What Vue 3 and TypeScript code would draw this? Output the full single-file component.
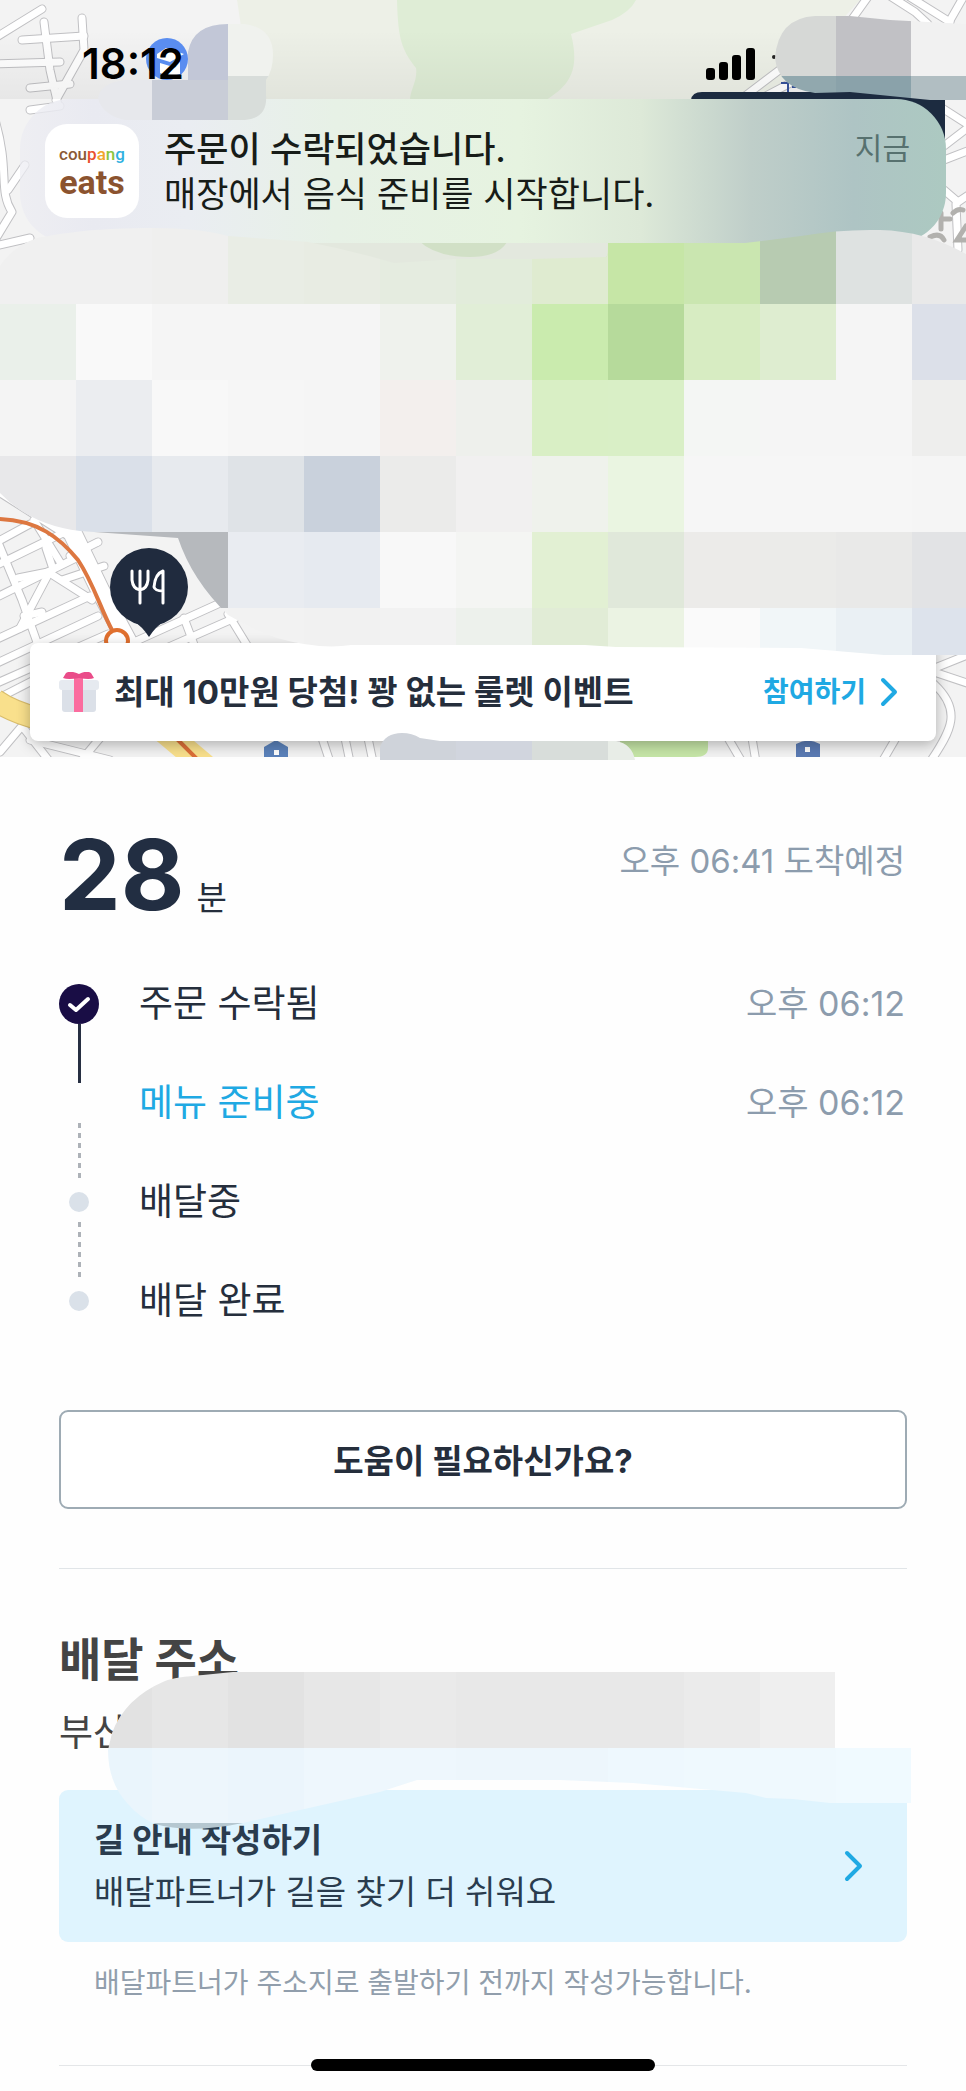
<script setup lang="ts">
interface Step {
  label: string
  time?: string
  state: 'done' | 'active' | 'todo'
  connector?: 'solid' | 'dotted'
}

interface Cell {
  x: number
  y: number
  fill: string
}

const CELL = 76

const steps: Step[] = [
  { label: '주문 수락됨', time: '오후 06:12', state: 'done', connector: 'solid' },
  { label: '메뉴 준비중', time: '오후 06:12', state: 'active', connector: 'dotted' },
  { label: '배달중', state: 'todo', connector: 'dotted' },
  { label: '배달 완료', state: 'todo' },
]

const brand = [
  { text: 'cou', color: '#8b5a35' },
  { text: 'p', color: '#e8502f' },
  { text: 'a', color: '#f2a62c' },
  { text: 'n', color: '#8cc63f' },
  { text: 'g', color: '#2fb1e0' },
]

const privacyRows: string[][] = [
  ['#f0f0f0', '#f0f0f0', '#efefee', '#e9ede5', '#e8ece3', '#e5ece0', '#e2ecdb', '#dfebd0', '#c6e6a6', '#cae6b0', '#b7cbb1', '#dee2e1', '#e9e9e9'],
  ['#eaf0ea', '#f9f9f9', '#f5f5f5', '#f5f5f5', '#f5f5f5', '#eff2ed', '#e1eed7', '#caebae', '#b6da9b', '#d7ecc2', '#deedd0', '#f5f5f5', '#dce0e9'],
  ['#f4f4f4', '#ebedf0', '#f8f8f8', '#f6f6f6', '#f5f5f5', '#f3efed', '#eef0ec', '#d9efc5', '#d9efc6', '#f4f6f4', '#f5f5f5', '#f5f5f5', '#eeeeed'],
  ['#e8e8ea', '#dae0e9', '#e7eaee', '#dfe3e7', '#c9d1dc', '#ebebea', '#f1f0f0', '#eff2ec', '#eaf5e1', '#f6f6f6', '#f6f6f6', '#f6f6f6', '#f5f5f5'],
  ['#b6b9bd', '#b6b9bd', '#b6b9bd', '#e9ecf1', '#e6eaf0', '#f8f8f8', '#f4f5f3', '#e2f0d3', '#e0e8da', '#ecebe9', '#ebebe9', '#e9e9e8', '#e2e3e5'],
  ['#f3f3f3', '#f3f3f3', '#f3f3f3', '#f2f2f2', '#f1f1f1', '#f2f2f2', '#edf1ec', '#e1ecd6', '#ebf3e3', '#fafafa', '#f1f6f8', '#eaf0f4', '#dde3ec'],
]

const privacyCells: Cell[] = privacyRows.flatMap((row, r) =>
  row.map((fill, c) => ({ x: c * CELL, y: 228 + r * CELL, fill })),
)

const addressGrays = ['#e2e2e2', '#e6e6e6', '#e2e2e2', '#e7e7e7', '#eaeaea', '#e8e8e8', '#e8e8e8', '#e8e8e8', '#ebebeb', '#efefef']
const addressBlues = ['#eaf5fc', '#edf6fc', '#ebf5fc', '#eef7fd', '#eef7fd', '#edf6fc', '#edf6fc', '#eef8fe', '#eff9fe', '#eff9fe', '#f0faff']

const streets: string[] = [
  'M-5 38 L42 9', 'M22 40 L84 36', 'M44 22 L50 70 L58 105', 'M-5 64 L60 62', 'M82 18 L84 50 L56 100', 'M30 88 L70 84', 'M30 110 L60 106',
  'M-5 120 C10 170 -2 190 12 212 L-5 240', 'M8 190 L25 165', 'M-5 246 L30 238',
  'M30 524 L-5 543', 'M65 532 L-5 566', 'M76 558 L-5 598', 'M98 542 L70 556', 'M104 566 L62 580', 'M90 596 L-5 640', 'M98 616 L-5 664', 'M108 634 L-5 684',
  'M-5 535 L22 600 L38 645', 'M34 520 L60 562', 'M46 548 L52 566', 'M18 578 L48 572 L92 600', 'M48 575 L20 628', 'M42 612 L24 616',
  'M240 594 L112 652', 'M262 606 L130 664', 'M184 618 L196 650', 'M228 614 L250 650', 'M-5 700 L34 680', 'M0 752 L22 726 L50 762', 'M80 762 L100 738', 'M30 740 L110 760',
  'M345 738 L350 762', 'M368 738 L373 762', 'M322 738 L330 762',
  'M728 738 L742 762', 'M752 738 L756 762', 'M896 738 L882 762',
  'M930 670 L970 654', 'M934 672 L970 684', 'M934 684 C962 710 952 730 930 762', 'M850 22 L870 -6', 'M890 -4 L915 12 L928 24', 'M948 24 L964 -4', 'M905 -6 L950 22',
  'M745 96 L790 62', 'M762 98 L800 78', 'M942 108 L970 126 L944 146', 'M944 160 L970 150', 'M944 190 L958 202 L970 194', 'M956 204 L958 250',
]
const mainRoad = 'M6 490 L72 532 L100 590 L130 646'
</script>

<template>
  <main class="page">
    <section class="hero">
      <svg class="layer" viewBox="0 0 966 757" preserveAspectRatio="xMidYMin slice" aria-hidden="true">
        <defs>
          <linearGradient id="haze" x1="0" y1="0" x2="0" y2="1">
            <stop offset="0.3" stop-color="#000" stop-opacity="0" />
            <stop offset="1" stop-color="#000" stop-opacity="0.05" />
          </linearGradient>
        </defs>
        <rect width="966" height="757" fill="#f3f3f3" />
        <path d="M237 0 L252 99 L225 260 H770 V99 L860 0Z" fill="#edf0e7" />
        <path d="M397 0 C398 40 402 50 416 68 C418 80 410 90 410 100 H546 C570 85 580 70 571 34 L612 20 Q630 12 636 0Z" fill="#dfedd6" />
        <path d="M300 240 H620 V270 H300Z" fill="#e3e8de" />
        <path d="M418 240 H508 Q500 257 470 257 Q435 257 418 240Z" fill="#d1e0c6" />
        <path d="M612 240 H760 V262 H605Z" fill="#c7e8a7" />
        <path d="M620 738 H708 V748 Q708 757 695 757 H620Z" fill="#c6e6a7" />
        <g class="road-edge">
          <path v-for="(d, i) in streets" :key="i" :d="d" />
          <path class="wide" :d="mainRoad" />
        </g>
        <g class="road-fill">
          <path v-for="(d, i) in streets" :key="i" :d="d" />
          <path class="wide" :d="mainRoad" />
        </g>
        <path d="M-5 700 Q12 712 40 719" fill="none" stroke="#d9bd6c" stroke-width="23" />
        <path d="M-5 700 Q12 712 40 719" fill="none" stroke="#f9e08c" stroke-width="21" />
        <path d="M160 728 L205 766" fill="none" stroke="#f9e08c" stroke-width="24" />
        <path d="M166 728 L200 762" fill="none" stroke="#dc6f38" stroke-width="4" />
        <path d="M-2 519 C38 520 60 538 78 560 C94 584 100 608 113 632" fill="none" stroke="#dd7740" stroke-width="4" />
        <circle cx="117" cy="641" r="11" fill="#fff" stroke="#e0702f" stroke-width="4" />
        <path d="M264 757 V747 L276 740 L288 747 V757Z" fill="#5b82bb" />
        <rect x="274" y="750" width="5" height="5" fill="#fff" />
        <path d="M796 757 V744 Q808 737 820 744 V757Z" fill="#5b7bb4" />
        <rect x="805" y="747" width="5" height="5" fill="#fff" />
        <rect width="966" height="99" fill="url(#haze)" />
        <circle cx="167" cy="59" r="21" fill="#5a8df0" />
        <path d="M157 54 L166 48 L184 54 L170 62 L157 58Z M160 63 L170 66 L180 62 V74 Q170 78 160 73Z" fill="#fff" />
        <path d="M781 83 H788 V92 M792 87 H796" fill="none" stroke="#344f95" stroke-width="2" />
        <path d="M691 104 V100 Q692 92 702 92 H945 V180 H691Z" fill="#1c2b40" />
        <path d="M941 213 V229 M942 219 H950 M930 237 Q940 232 944 240 M953 213 Q958 208 963 210 M966 226 L957 240 H966" fill="none" stroke="#b2b1ae" stroke-width="5" stroke-linecap="round" />
        <circle cx="774" cy="57" r="2" fill="#222" />
        <circle cx="149" cy="587" r="39" fill="#202b3e" />
        <path d="M133 621 H165 Q156 626 149 637 Q142 626 133 621Z" fill="#202b3e" />
        <g fill="none" stroke="#fff" stroke-width="3" stroke-linecap="round" stroke-linejoin="round">
          <path d="M132 571 V580 Q133 589 140 590 Q147 589 148 580 V571 M140 571 V603" />
          <path d="M163 603 V571 Q155 574 154 587 Q155 591 163 591" />
        </g>
      </svg>

      <header class="status">
        <time class="clock">18:12</time>
        <svg class="signal" width="49" height="32" viewBox="0 0 49 32" role="img" aria-label="신호 세기">
          <rect x="0" y="20" width="9" height="12" rx="3" />
          <rect x="13" y="14" width="9" height="18" rx="3" />
          <rect x="26" y="7" width="9" height="25" rx="3" />
          <rect x="40" y="0" width="9" height="32" rx="3" />
        </svg>
      </header>

      <article class="notice">
        <div class="logo" aria-label="coupang eats">
          <span class="logo-top"><span v-for="b in brand" :key="b.text" :style="{ color: b.color }">{{ b.text }}</span></span>
          <span class="logo-bottom">eats</span>
        </div>
        <div class="notice-copy">
          <strong>주문이 수락되었습니다.</strong>
          <span>매장에서 음식 준비를 시작합니다.</span>
        </div>
        <span class="notice-time">지금</span>
      </article>

      <aside class="event">
        <svg width="40" height="40" viewBox="0 0 40 40" aria-hidden="true">
          <rect x="3" y="14" width="34" height="26" rx="3" fill="#dbe0e8" />
          <rect x="0" y="8" width="40" height="10" rx="3" fill="#e6eaf0" />
          <rect x="15" y="4" width="9" height="36" fill="#fb6c9f" />
          <path d="M20 2 Q11 -2 7 1 L4 6 Q9 8 20 6 Q31 8 35 6 L32 1 Q28 -2 20 2Z" fill="#ea4c89" />
        </svg>
        <strong class="event-text">최대 10만원 당첨! 꽝 없는 룰렛 이벤트</strong>
        <a class="event-link" href="#event">
          참여하기
          <svg width="20" height="30" viewBox="0 0 20 30" aria-hidden="true"><path class="chevron" d="M4 3 L16 15 L4 27" /></svg>
        </a>
      </aside>

      <svg class="layer over" viewBox="0 0 966 757" preserveAspectRatio="xMidYMin slice" aria-hidden="true">
        <defs>
          <clipPath id="main-mask">
            <path d="M0 266 Q12 247 37 238 Q90 227 154 228 Q200 228 228 236 L308 242 Q350 250 394 263 L456 259 H532 L607 257 L608 243 H745 L801 236 Q840 229 880 230 Q925 231 966 254 V655 H884 L801 648 L616 647 L585 645 H351 Q320 650 277 638 Q250 628 228 615 Q192 580 178 538 L80 531 Q30 525 0 493Z" />
          </clipPath>
          <clipPath id="left-mask">
            <path d="M228 24 H245 Q273 28 273 55 Q273 70 266 80 V95 Q268 118 245 120 H125 Q102 115 98 98 Q100 83 125 80 H188 V52 Q193 24 228 24Z" />
          </clipPath>
          <clipPath id="right-mask">
            <path d="M775 58 Q778 18 815 16 H850 L890 20 L966 24 V100 H930 L850 92 L815 93 Q778 88 775 58Z" />
          </clipPath>
          <clipPath id="bottom-mask">
            <path d="M380 760 V747 Q385 733 402 733 Q412 733 420 738 L440 741 H616 Q632 744 635 760Z" />
          </clipPath>
        </defs>
        <g clip-path="url(#main-mask)" shape-rendering="crispEdges">
          <rect v-for="(c, i) in privacyCells" :key="i" :x="c.x" :y="c.y" width="76" height="76" :fill="c.fill" />
        </g>
        <g clip-path="url(#left-mask)">
          <rect x="185" y="24" width="43" height="56" fill="#c2c7d7" />
          <rect x="228" y="24" width="46" height="52" fill="#f0f2ee" />
          <rect x="98" y="80" width="54" height="41" fill="#e7e8ec" />
          <rect x="152" y="80" width="76" height="41" fill="#c9cdd7" />
          <rect x="228" y="76" width="46" height="45" fill="#d8ddda" />
        </g>
        <g clip-path="url(#right-mask)">
          <rect x="770" y="10" width="66" height="66" fill="#d6d8d6" />
          <rect x="836" y="10" width="75" height="66" fill="#c1c1c5" />
          <rect x="911" y="10" width="55" height="66" fill="#f1f1f1" />
          <rect x="770" y="76" width="66" height="30" fill="#91a8ae" />
          <rect x="836" y="76" width="75" height="30" fill="#8aa2aa" />
          <rect x="911" y="76" width="55" height="30" fill="#b1bec2" />
        </g>
        <g clip-path="url(#bottom-mask)">
          <rect x="380" y="730" width="76" height="30" fill="#cfd3da" />
          <rect x="456" y="730" width="76" height="30" fill="#d1d5de" />
          <rect x="532" y="730" width="76" height="30" fill="#d8ddda" />
          <rect x="608" y="730" width="30" height="30" fill="#e8ede7" />
        </g>
      </svg>
    </section>

    <section class="progress">
      <div class="eta">
        <h1><span class="eta-number">28</span><span class="eta-unit">분</span></h1>
        <p>오후 06:41 도착예정</p>
      </div>
      <ol class="steps">
        <li v-for="s in steps" :key="s.label" :class="s.state">
          <div class="rail">
            <span class="marker">
              <svg v-if="s.state === 'done'" width="40" height="40" viewBox="0 0 40 40" aria-hidden="true">
                <circle cx="20" cy="20" r="20" fill="#190d45" />
                <path d="M11 21 L17 26 L29 15" fill="none" stroke="#fff" stroke-width="4" stroke-linecap="round" stroke-linejoin="round" />
              </svg>
              <i v-else-if="s.state === 'todo'" class="dot"></i>
            </span>
            <span v-if="s.connector" class="connector" :class="s.connector"></span>
          </div>
          <span class="step-label">{{ s.label }}</span>
          <time v-if="s.time" class="step-time">{{ s.time }}</time>
        </li>
      </ol>
      <button class="help" type="button">도움이 필요하신가요?</button>
    </section>

    <section class="address">
      <h2>배달 주소</h2>
      <p class="address-line">부산</p>
      <button class="guide" type="button">
        <span class="guide-copy">
          <strong>길 안내 작성하기</strong>
          <span>배달파트너가 길을 찾기 더 쉬워요</span>
        </span>
        <svg width="20" height="32" viewBox="0 0 20 32" aria-hidden="true"><path class="chevron" d="M3 3 L16 16 L3 29" /></svg>
      </button>
      <p class="guide-note">배달파트너가 주소지로 출발하기 전까지 작성가능합니다.</p>
      <svg class="address-mask" viewBox="0 1668 966 166" preserveAspectRatio="none" aria-hidden="true">
        <defs>
          <clipPath id="address-clip">
            <path d="M835 1672 H233 L203 1675 Q175 1677 165 1681 Q125 1698 112 1733 L108 1750 Q108 1782 127 1803 Q140 1818 155 1824 Q190 1834 243 1823 L300 1810 L380 1792 L417 1780 H560 L633 1783 L746 1793 L766 1798 L793 1799 L830 1803 H911 V1748 H835Z" />
          </clipPath>
        </defs>
        <g clip-path="url(#address-clip)" shape-rendering="crispEdges">
          <rect v-for="(f, i) in addressGrays" :key="'g' + i" :x="76 + i * 76" y="1672" width="76" height="76" :fill="f" />
          <rect v-for="(f, i) in addressBlues" :key="'b' + i" :x="76 + i * 76" y="1748" width="76" height="75" :fill="f" />
          <rect x="152" y="1823" width="100" height="12" fill="#b5c7d0" />
        </g>
      </svg>
    </section>

    <footer class="bottom"><span class="home-bar"></span></footer>
  </main>
</template>

<style>
body {
  background: #fff;
}
</style>

<style scoped>
.page {
  background: #fefefe;
  color: #252e3c;
  font-family: Inter, "Noto Sans CJK KR", sans-serif;
}
h1, h2, p, ol {
  margin: 0;
  padding: 0;
  font-weight: 400;
}
button {
  font: inherit;
  color: inherit;
  cursor: pointer;
}
.hero {
  position: relative;
  display: flex;
  flex-direction: column;
  min-height: 757px;
}
.layer {
  position: absolute;
  inset: 0;
  width: 100%;
  height: 100%;
}
.over {
  overflow: visible;
  pointer-events: none;
}
.road-edge, .road-fill {
  fill: none;
  stroke-linecap: round;
  stroke-linejoin: round;
}
.road-edge {
  stroke: #c0c0c3;
  stroke-width: 9;
}
.road-fill {
  stroke: #fff;
  stroke-width: 7;
}
.road-edge .wide {
  stroke-width: 20;
}
.road-fill .wide {
  stroke-width: 18;
}
.status {
  position: relative;
  display: flex;
  align-items: center;
  justify-content: space-between;
  box-sizing: border-box;
  height: 99px;
  padding: 29px 211px 0 82px;
}
.clock {
  color: #000;
  font-size: 42px;
  line-height: 48px;
  font-weight: 600;
}
.notice {
  position: relative;
  display: flex;
  align-items: flex-start;
  box-sizing: border-box;
  height: 144px;
  margin: 0 20px;
  padding: 25px 36px 0 25px;
  border-radius: 50px;
  background: linear-gradient(90deg, rgba(236, 236, 242, 0.7) 0%, #e9eaf1 8%, #eaedf2 18%, #e7f1e6 34%, #e6f3e0 54%, #dde9d8 67%, #bfcec9 79%, #aec4c4 90%, #acc9c1 100%);
}
.logo {
  display: flex;
  flex-direction: column;
  align-items: center;
  box-sizing: border-box;
  width: 94px;
  height: 94px;
  padding-top: 19px;
  border-radius: 22px;
  background: #fff;
  font-family: Roboto, sans-serif;
}
.logo-top {
  font-size: 17px;
  line-height: 22px;
  font-weight: 500;
}
.logo-bottom {
  color: #8b532f;
  font-size: 34px;
  line-height: 34px;
  font-weight: 700;
}
.notice-copy {
  display: flex;
  flex-direction: column;
  flex: 1;
  margin: 3px 0 0 25px;
  color: #171c18;
  font-size: 35px;
  line-height: 45px;
}
.notice-copy strong {
  font-weight: 500;
}
.notice-time {
  color: #57716f;
  font-size: 30px;
  line-height: 48px;
}
.event {
  position: relative;
  display: flex;
  align-items: center;
  box-sizing: border-box;
  height: 98px;
  margin: auto 30px 16px;
  padding: 0 37px 0 29px;
  border-radius: 8px;
  background: #fff;
  box-shadow: 0 4px 14px rgba(0, 0, 0, 0.28);
}
.event-text {
  flex: 1;
  margin-left: 15px;
  font-size: 33px;
  line-height: 48px;
  font-weight: 700;
}
.event-link {
  display: flex;
  align-items: center;
  gap: 13px;
  color: #1fa9e3;
  font-size: 28px;
  line-height: 40px;
  font-weight: 700;
  text-decoration: none;
}
.chevron {
  fill: none;
  stroke: #1fa9e3;
  stroke-width: 4;
  stroke-linecap: round;
  stroke-linejoin: round;
}
.progress {
  margin: 0 59px;
  padding-bottom: 59px;
  border-bottom: 1px solid #e1e5e8;
}
.eta {
  display: flex;
  align-items: flex-start;
  justify-content: space-between;
  height: 163px;
  padding: 64px 2px 0 0;
}
.eta h1 {
  display: flex;
  align-items: baseline;
  gap: 12px;
  line-height: 108px;
}
.eta-number {
  color: #222e42;
  font-size: 98px;
  font-weight: 700;
}
.eta-unit {
  font-size: 33px;
}
.eta p {
  margin-top: 16px;
  color: #8c9cad;
  font-size: 33px;
  line-height: 48px;
}
.steps {
  list-style: none;
}
.steps li {
  display: flex;
  align-items: flex-start;
  padding-right: 2px;
}
.rail {
  display: flex;
  flex-direction: column;
  align-items: center;
  width: 40px;
}
.marker {
  display: flex;
  align-items: center;
  justify-content: center;
  width: 40px;
  height: 40px;
}
.dot {
  width: 20px;
  height: 20px;
  border-radius: 50%;
  background: #dae1e9;
}
.connector {
  width: 3px;
  height: 59px;
}
.solid {
  background: #272f42;
}
.dotted {
  background: repeating-linear-gradient(180deg, #adb2b8 0 5px, transparent 5px 10px);
}
.step-label {
  flex: 1;
  margin-left: 40px;
  font-size: 37px;
  line-height: 40px;
}
.active .step-label {
  color: #1fa9e3;
}
.step-time {
  color: #8c9cad;
  font-size: 34px;
  line-height: 40px;
}
.help {
  display: block;
  box-sizing: border-box;
  width: 100%;
  height: 99px;
  margin-top: 89px;
  padding: 0 0 2px;
  border: 2px solid #9eabb4;
  border-radius: 9px;
  background: #fff;
  font-size: 33px;
  font-weight: 700;
}
.address {
  position: relative;
  padding: 60px 59px 0;
}
.address h2 {
  color: #444;
  font-size: 46px;
  line-height: 60px;
  font-weight: 700;
}
.address-line {
  margin-top: 20px;
  color: #444;
  font-size: 37px;
  line-height: 48px;
}
.guide {
  display: flex;
  align-items: center;
  justify-content: space-between;
  box-sizing: border-box;
  width: 100%;
  height: 152px;
  margin-top: 33px;
  padding: 0 43px 0 35px;
  border: 0;
  border-radius: 9px;
  background: #dff4fe;
  color: #2a3c4e;
  text-align: left;
}
.guide-copy {
  display: flex;
  flex-direction: column;
  font-size: 33px;
  line-height: 52px;
}
.guide-note {
  margin: 20px 35px 0;
  color: #919eac;
  font-size: 28px;
  line-height: 42px;
}
.address-mask {
  position: absolute;
  top: 99px;
  left: 0;
  width: 100%;
  height: 166px;
  pointer-events: none;
}
.bottom {
  display: flex;
  justify-content: center;
  height: 32px;
  margin: 55px 59px 0;
  background: linear-gradient(#e4e6e8, #e4e6e8) 0 6px / 100% 1px no-repeat;
}
.home-bar {
  width: 344px;
  height: 12px;
  border-radius: 6px;
  background: #000;
}
</style>
